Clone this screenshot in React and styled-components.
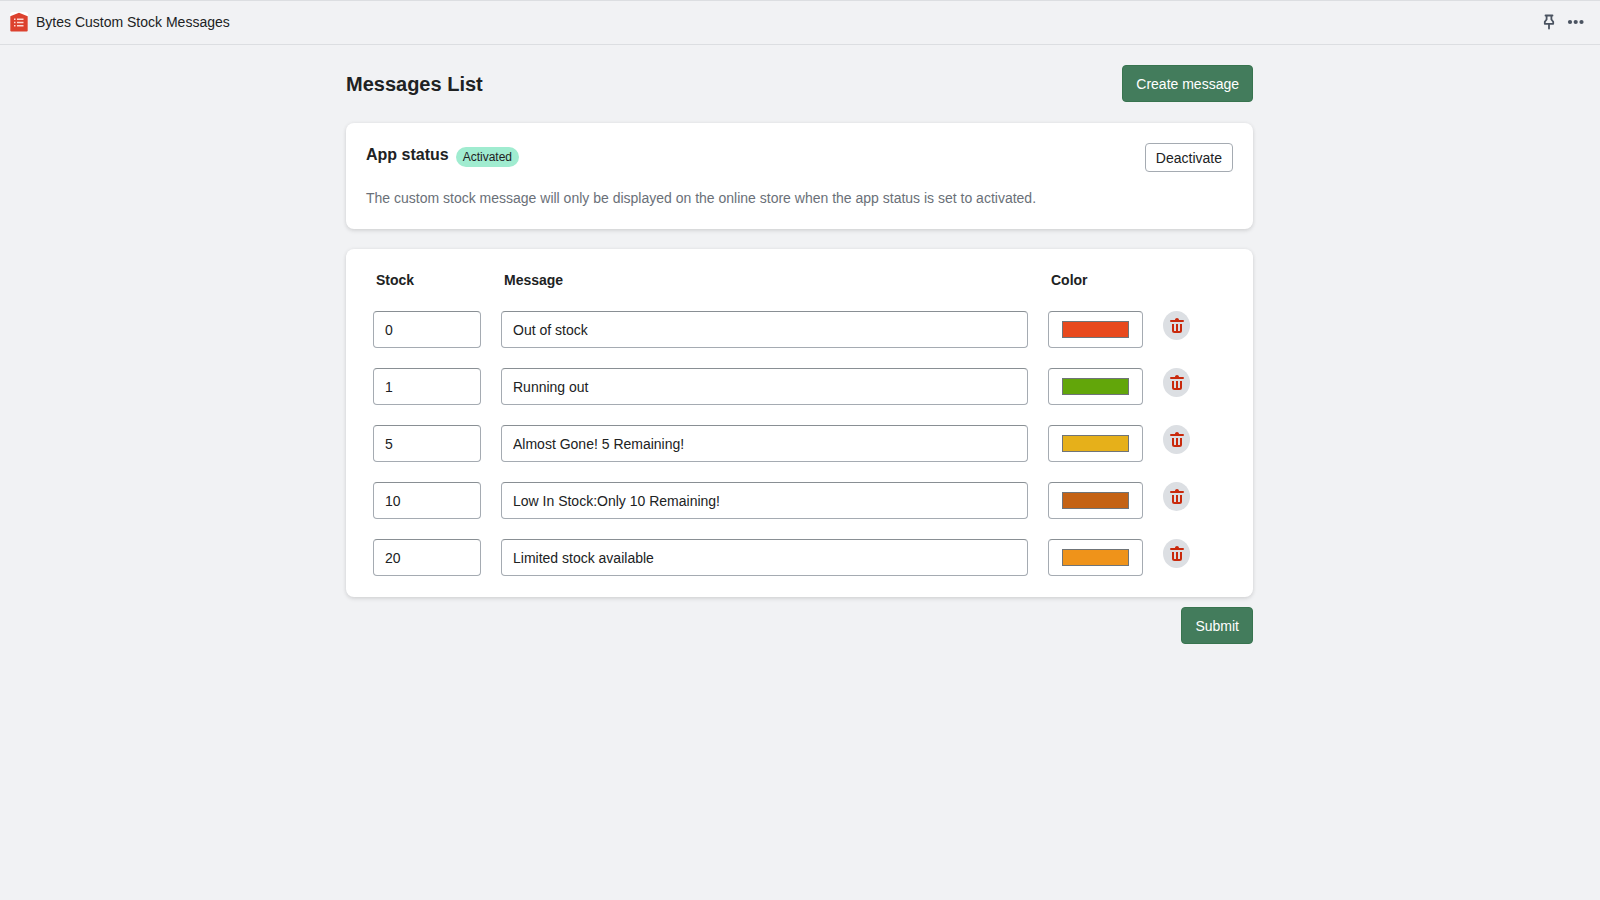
import React, { useState } from 'react';
import styled, { createGlobalStyle, ThemeProvider } from 'styled-components';

const theme = {
  page: '#f1f2f4',
  line: '#dcdee1',
  text: '#202223',
  subdued: '#6a7078',
  primary: '#437c5c',
  primaryEdge: '#38744f',
  border: '#a5abb2',
  borderTop: '#898f94',
  success: '#a0ecd0',
  neutral: '#dcdfe3',
  critical: '#c9290c',
};

const GlobalStyle = createGlobalStyle`
  * {
    box-sizing: border-box;
  }

  body {
    margin: 0;
    background: ${theme.page};
    color: ${theme.text};
    font-family: 'Liberation Sans', Arial, sans-serif;
    font-size: 14px;
    line-height: 20px;
  }

  button,
  input {
    font: inherit;
    color: inherit;
  }
`;

const TopBar = styled.header`
  display: flex;
  align-items: center;
  gap: 8px;
  height: 45px;
  padding: 0 15px 1px 10px;
  border-top: 1px solid ${(props) => props.theme.line};
  border-bottom: 1px solid ${(props) => props.theme.line};
`;

const AppName = styled.span`
  flex: 1;
`;

const BarActions = styled.div`
  display: flex;
  align-items: center;
  gap: 12px;
`;

const BarButton = styled.button`
  display: flex;
  padding: 0;
  border: none;
  background: none;
  cursor: pointer;
`;

const Main = styled.main`
  max-width: 940px;
  margin: 0 auto;
  padding: 20px 17px 20px 16px;
`;

const PageHeader = styled.div`
  display: flex;
  align-items: center;
  justify-content: space-between;
  margin-bottom: 21px;
`;

const Title = styled.h1`
  margin: 0;
  font-size: 20px;
  line-height: 28px;
`;

const PrimaryButton = styled.button`
  height: 37px;
  padding: 0 13px;
  border: 1px solid ${(props) => props.theme.primaryEdge};
  border-radius: 4px;
  background: ${(props) => props.theme.primary};
  color: #fff;
  cursor: pointer;
`;

const OutlineButton = styled.button`
  height: 29px;
  padding: 0 10px;
  border: 1px solid ${(props) => props.theme.border};
  border-radius: 4px;
  background: #fff;
  cursor: pointer;
`;

const Card = styled.section`
  margin-bottom: 20px;
  border-radius: 8px;
  background: #fff;
  box-shadow: 0 0 4px rgba(23, 24, 24, 0.06), 0 2px 4px rgba(0, 0, 0, 0.1);
`;

const StatusCard = styled(Card)`
  padding: 20px 20px 21px;
`;

const StatusHeader = styled.div`
  display: flex;
  align-items: flex-start;
  justify-content: space-between;
  margin-bottom: 16px;
`;

const StatusTitle = styled.div`
  display: flex;
  align-items: flex-end;
  gap: 7px;
`;

const Heading = styled.h2`
  margin: 0;
  font-size: 16px;
  line-height: 24px;
`;

const Badge = styled.span`
  padding: 0 7px;
  border-radius: 10px;
  background: ${(props) => props.theme.success};
  font-size: 12px;
`;

const Hint = styled.p`
  margin: 0;
  color: ${(props) => props.theme.subdued};
`;

const TableCard = styled(Card)`
  margin-bottom: 10px;
  padding: 0 28px 1px 27px;
`;

const MessageTable = styled.table`
  width: 100%;
  table-layout: fixed;
  border-collapse: collapse;
`;

const Col = styled.col`
  width: ${(props) => props.$width};
`;

const Th = styled.th`
  height: 62px;
  padding: 0 0 0 3px;
  text-align: left;
`;

const Td = styled.td`
  padding: 0 20px 20px 0;
  vertical-align: top;

  &:last-child {
    padding-right: 0;
  }
`;

const Field = styled.input`
  display: block;
  width: 100%;
  height: 37px;
  padding: 0 11px;
  border: 1px solid ${(props) => props.theme.border};
  border-top-color: ${(props) => props.theme.borderTop};
  border-radius: 4px;
  background: #fff;
`;

const ColorField = styled(Field)`
  padding: 9px 13px;
  cursor: pointer;

  &::-webkit-color-swatch-wrapper {
    padding: 0;
  }

  &::-webkit-color-swatch {
    border: 1px solid #6f7478;
    border-radius: 0;
  }
`;

const DeleteButton = styled.button`
  display: flex;
  align-items: center;
  justify-content: center;
  width: 27px;
  height: 29px;
  padding: 0;
  border: none;
  border-radius: 50%;
  background: ${(props) => props.theme.neutral};
  color: ${(props) => props.theme.critical};
  cursor: pointer;
`;

const Actions = styled.div`
  display: flex;
  justify-content: flex-end;
`;

const AppLogo = () => (
  <svg width="18" height="20" viewBox="0 0 18 20" aria-hidden="true">
    <rect width="18" height="19" rx="3" fill="#fff" />
    <path d="M0.3 4.3 9 0.8l8.7 3.5v14.2a1 1 0 0 1-1 1H1.3a1 1 0 0 1-1-1z" fill="#dc412e" />
    <path
      d="M4 7.3h1.5M7 7.3h6.5M4 10.5h1.5M7 10.5h6.5M4 13.7h1.5M7 13.7h6.5"
      stroke="#fbd9d4"
      strokeWidth="1.5"
    />
  </svg>
);

const PinIcon = () => (
  <svg width="12" height="16" viewBox="0 0 12 16" fill="none" stroke="#4a5360" aria-hidden="true">
    <path
      d="M2.5 1.5h7M3.6 1.5v4L1.8 7.8v2h8.4v-2L8.4 5.5v-4"
      strokeWidth="1.8"
      strokeLinejoin="round"
      strokeLinecap="round"
    />
    <path d="M6 10v4.6" strokeWidth="1.8" strokeLinecap="round" />
  </svg>
);

const DotsIcon = () => (
  <svg width="18" height="6" viewBox="0 0 18 6" fill="#4a5360" aria-hidden="true">
    <circle cx="3" cy="3" r="2.1" />
    <circle cx="8.7" cy="3" r="2.1" />
    <circle cx="14.5" cy="3" r="2.1" />
  </svg>
);

const TrashIcon = () => (
  <svg width="14" height="16" viewBox="3 2 14 16" fill="currentColor" aria-hidden="true">
    <path d="M8 4c0-1.100.9-2 2-2s2 .9 2 2h4a1 1 0 1 1 0 2H4a1 1 0 0 1 0-2h4zM5 14.500V8h2v6.500a.5.5 0 0 0 .5.5H9V8h2v7h1.500a.5.5 0 0 0 .5-.5V8h2v6.500a2.500 2.500 0 0 1-2.500 2.500h-5A2.500 2.500 0 0 1 5 14.500z" />
  </svg>
);

const initialMessages = [
  { id: 1, stock: '0', message: 'Out of stock', color: '#e8491d' },
  { id: 2, stock: '1', message: 'Running out', color: '#62a60a' },
  { id: 3, stock: '5', message: 'Almost Gone! 5 Remaining!', color: '#e6b01a' },
  { id: 4, stock: '10', message: 'Low In Stock:Only 10 Remaining!', color: '#c46214' },
  { id: 5, stock: '20', message: 'Limited stock available', color: '#ef931a' },
];

const MessageRow = ({ item, onChange, onDelete }) => {
  const handleChange = (e) => onChange(item.id, e.target.name, e.target.value);

  return (
    <tr>
      <Td>
        <Field name="stock" aria-label="Stock" value={item.stock} onChange={handleChange} />
      </Td>
      <Td>
        <Field name="message" aria-label="Message" value={item.message} onChange={handleChange} />
      </Td>
      <Td>
        <ColorField
          type="color"
          name="color"
          aria-label="Color"
          value={item.color}
          onChange={handleChange}
        />
      </Td>
      <Td>
        <DeleteButton type="button" aria-label="Delete message" onClick={() => onDelete(item.id)}>
          <TrashIcon />
        </DeleteButton>
      </Td>
    </tr>
  );
};

export default function App() {
  const [messages, setMessages] = useState(initialMessages);
  const [active, setActive] = useState(true);

  const updateMessage = (id, key, value) => {
    setMessages(messages.map((item) => (item.id === id ? { ...item, [key]: value } : item)));
  };

  const deleteMessage = (id) => {
    setMessages(messages.filter((item) => item.id !== id));
  };

  const createMessage = () => {
    setMessages([...messages, { id: Date.now(), stock: '', message: '', color: '#000000' }]);
  };

  return (
    <ThemeProvider theme={theme}>
      <GlobalStyle />
      <TopBar>
        <AppLogo />
        <AppName>Bytes Custom Stock Messages</AppName>
        <BarActions>
          <BarButton type="button" aria-label="Pin app">
            <PinIcon />
          </BarButton>
          <BarButton type="button" aria-label="More actions">
            <DotsIcon />
          </BarButton>
        </BarActions>
      </TopBar>
      <Main>
        <PageHeader>
          <Title>Messages List</Title>
          <PrimaryButton type="button" onClick={createMessage}>
            Create message
          </PrimaryButton>
        </PageHeader>
        <StatusCard>
          <StatusHeader>
            <StatusTitle>
              <Heading>App status</Heading>
              <Badge>{active ? 'Activated' : 'Deactivated'}</Badge>
            </StatusTitle>
            <OutlineButton type="button" onClick={() => setActive(!active)}>
              {active ? 'Deactivate' : 'Activate'}
            </OutlineButton>
          </StatusHeader>
          <Hint>
            The custom stock message will only be displayed on the online store when the app status
            is set to activated.
          </Hint>
        </StatusCard>
        <form onSubmit={(e) => e.preventDefault()}>
          <TableCard>
            <MessageTable>
              <colgroup>
                <Col $width="128px" />
                <Col $width="auto" />
                <Col $width="115px" />
                <Col $width="62px" />
              </colgroup>
              <thead>
                <tr>
                  <Th>Stock</Th>
                  <Th>Message</Th>
                  <Th>Color</Th>
                  <Th aria-label="Actions" />
                </tr>
              </thead>
              <tbody>
                {messages.map((item) => (
                  <MessageRow
                    key={item.id}
                    item={item}
                    onChange={updateMessage}
                    onDelete={deleteMessage}
                  />
                ))}
              </tbody>
            </MessageTable>
          </TableCard>
          <Actions>
            <PrimaryButton type="submit">Submit</PrimaryButton>
          </Actions>
        </form>
      </Main>
    </ThemeProvider>
  );
}
